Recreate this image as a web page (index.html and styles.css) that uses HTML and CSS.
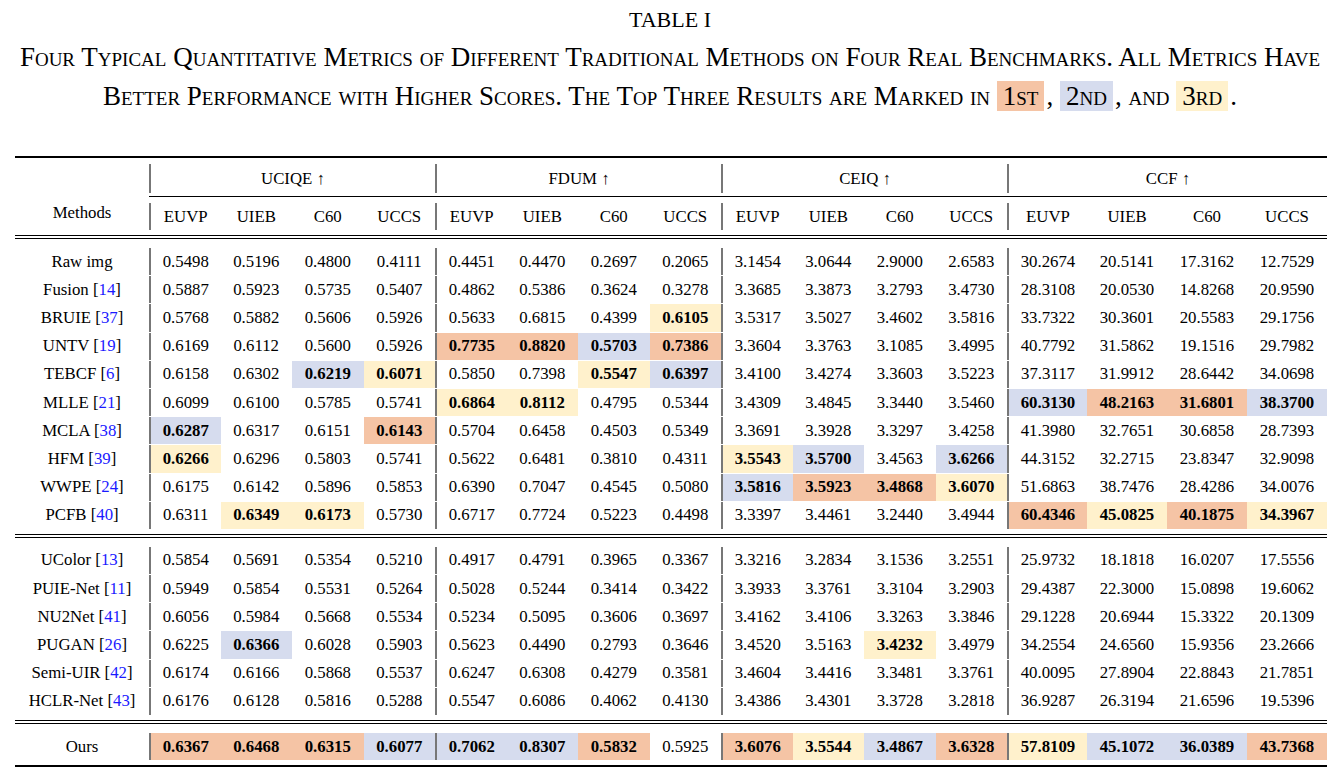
FILE: index.html
```html
<!DOCTYPE html>
<html>
<head>
<meta charset="utf-8">
<link rel="stylesheet" href="styles.css">
</head>
<body>
<div class="title">TABLE I</div>
<div class="caption">
  <div class="line">Four Typical Quantitative Metrics of Different Traditional Methods on Four Real Benchmarks. All Metrics Have</div>
  <div class="line">Better Performance with Higher Scores. The Top Three Results are Marked in <span class="mark m1">1st</span>, <span class="mark m2">2nd</span>, and <span class="mark m3">3rd</span>.</div>
</div>

<div class="tbl">
  <div class="rule-top"></div>
  <div class="hdr">
    <div class="meth">Methods</div>
    <div class="grp g1">UCIQE ↑</div>
    <div class="grp g2">FDUM ↑</div>
    <div class="grp g3">CEIQ ↑</div>
    <div class="grp g4">CCF ↑</div>
    <div class="cmid"></div>
    <div class="sub s2 g">EUVP</div><div class="sub s3">UIEB</div><div class="sub s4">C60</div><div class="sub s5">UCCS</div>
    <div class="sub s6 g">EUVP</div><div class="sub s7">UIEB</div><div class="sub s8">C60</div><div class="sub s9">UCCS</div>
    <div class="sub s10 g">EUVP</div><div class="sub s11">UIEB</div><div class="sub s12">C60</div><div class="sub s13">UCCS</div>
    <div class="sub s14 g">EUVP</div><div class="sub s15">UIEB</div><div class="sub s16">C60</div><div class="sub s17">UCCS</div>
  </div>
  <div class="dbl"></div>

  <div class="body">
    <div class="row"><div class="name">Raw img</div>
      <div class="c g">0.5498</div><div class="c">0.5196</div><div class="c">0.4800</div><div class="c">0.4111</div>
      <div class="c g">0.4451</div><div class="c">0.4470</div><div class="c">0.2697</div><div class="c">0.2065</div>
      <div class="c g">3.1454</div><div class="c">3.0644</div><div class="c">2.9000</div><div class="c">2.6583</div>
      <div class="c g">30.2674</div><div class="c">20.5141</div><div class="c">17.3162</div><div class="c">12.7529</div></div>
    <div class="row"><div class="name">Fusion [<span class="ref">14</span>]</div>
      <div class="c g">0.5887</div><div class="c">0.5923</div><div class="c">0.5735</div><div class="c">0.5407</div>
      <div class="c g">0.4862</div><div class="c">0.5386</div><div class="c">0.3624</div><div class="c">0.3278</div>
      <div class="c g">3.3685</div><div class="c">3.3873</div><div class="c">3.2793</div><div class="c">3.4730</div>
      <div class="c g">28.3108</div><div class="c">20.0530</div><div class="c">14.8268</div><div class="c">20.9590</div></div>
    <div class="row"><div class="name">BRUIE [<span class="ref">37</span>]</div>
      <div class="c g">0.5768</div><div class="c">0.5882</div><div class="c">0.5606</div><div class="c">0.5926</div>
      <div class="c g">0.5633</div><div class="c">0.6815</div><div class="c">0.4399</div><div class="c m3 b">0.6105</div>
      <div class="c g">3.5317</div><div class="c">3.5027</div><div class="c">3.4602</div><div class="c">3.5816</div>
      <div class="c g">33.7322</div><div class="c">30.3601</div><div class="c">20.5583</div><div class="c">29.1756</div></div>
    <div class="row"><div class="name">UNTV [<span class="ref">19</span>]</div>
      <div class="c g">0.6169</div><div class="c">0.6112</div><div class="c">0.5600</div><div class="c">0.5926</div>
      <div class="c g m1 b">0.7735</div><div class="c m1 b">0.8820</div><div class="c m2 b">0.5703</div><div class="c m1 b">0.7386</div>
      <div class="c g">3.3604</div><div class="c">3.3763</div><div class="c">3.1085</div><div class="c">3.4995</div>
      <div class="c g">40.7792</div><div class="c">31.5862</div><div class="c">19.1516</div><div class="c">29.7982</div></div>
    <div class="row"><div class="name">TEBCF [<span class="ref">6</span>]</div>
      <div class="c g">0.6158</div><div class="c">0.6302</div><div class="c m2 b">0.6219</div><div class="c m3 b">0.6071</div>
      <div class="c g">0.5850</div><div class="c">0.7398</div><div class="c m3 b">0.5547</div><div class="c m2 b">0.6397</div>
      <div class="c g">3.4100</div><div class="c">3.4274</div><div class="c">3.3603</div><div class="c">3.5223</div>
      <div class="c g">37.3117</div><div class="c">31.9912</div><div class="c">28.6442</div><div class="c">34.0698</div></div>
    <div class="row"><div class="name">MLLE [<span class="ref">21</span>]</div>
      <div class="c g">0.6099</div><div class="c">0.6100</div><div class="c">0.5785</div><div class="c">0.5741</div>
      <div class="c g m3 b">0.6864</div><div class="c m3 b">0.8112</div><div class="c">0.4795</div><div class="c">0.5344</div>
      <div class="c g">3.4309</div><div class="c">3.4845</div><div class="c">3.3440</div><div class="c">3.5460</div>
      <div class="c g m2 b">60.3130</div><div class="c m1 b">48.2163</div><div class="c m1 b">31.6801</div><div class="c m2 b">38.3700</div></div>
    <div class="row"><div class="name">MCLA [<span class="ref">38</span>]</div>
      <div class="c g m2 b">0.6287</div><div class="c">0.6317</div><div class="c">0.6151</div><div class="c m1 b">0.6143</div>
      <div class="c g">0.5704</div><div class="c">0.6458</div><div class="c">0.4503</div><div class="c">0.5349</div>
      <div class="c g">3.3691</div><div class="c">3.3928</div><div class="c">3.3297</div><div class="c">3.4258</div>
      <div class="c g">41.3980</div><div class="c">32.7651</div><div class="c">30.6858</div><div class="c">28.7393</div></div>
    <div class="row"><div class="name">HFM [<span class="ref">39</span>]</div>
      <div class="c g m3 b">0.6266</div><div class="c">0.6296</div><div class="c">0.5803</div><div class="c">0.5741</div>
      <div class="c g">0.5622</div><div class="c">0.6481</div><div class="c">0.3810</div><div class="c">0.4311</div>
      <div class="c g m3 b">3.5543</div><div class="c m2 b">3.5700</div><div class="c">3.4563</div><div class="c m2 b">3.6266</div>
      <div class="c g">44.3152</div><div class="c">32.2715</div><div class="c">23.8347</div><div class="c">32.9098</div></div>
    <div class="row"><div class="name">WWPE [<span class="ref">24</span>]</div>
      <div class="c g">0.6175</div><div class="c">0.6142</div><div class="c">0.5896</div><div class="c">0.5853</div>
      <div class="c g">0.6390</div><div class="c">0.7047</div><div class="c">0.4545</div><div class="c">0.5080</div>
      <div class="c g m2 b">3.5816</div><div class="c m1 b">3.5923</div><div class="c m1 b">3.4868</div><div class="c m3 b">3.6070</div>
      <div class="c g">51.6863</div><div class="c">38.7476</div><div class="c">28.4286</div><div class="c">34.0076</div></div>
    <div class="row"><div class="name">PCFB [<span class="ref">40</span>]</div>
      <div class="c g">0.6311</div><div class="c m3 b">0.6349</div><div class="c m3 b">0.6173</div><div class="c">0.5730</div>
      <div class="c g">0.6717</div><div class="c">0.7724</div><div class="c">0.5223</div><div class="c">0.4498</div>
      <div class="c g">3.3397</div><div class="c">3.4461</div><div class="c">3.2440</div><div class="c">3.4944</div>
      <div class="c g m1 b">60.4346</div><div class="c m3 b">45.0825</div><div class="c m1 b">40.1875</div><div class="c m3 b">34.3967</div></div>
  </div>
  <div class="dbl"></div>

  <div class="body">
    <div class="row"><div class="name">UColor [<span class="ref">13</span>]</div>
      <div class="c g">0.5854</div><div class="c">0.5691</div><div class="c">0.5354</div><div class="c">0.5210</div>
      <div class="c g">0.4917</div><div class="c">0.4791</div><div class="c">0.3965</div><div class="c">0.3367</div>
      <div class="c g">3.3216</div><div class="c">3.2834</div><div class="c">3.1536</div><div class="c">3.2551</div>
      <div class="c g">25.9732</div><div class="c">18.1818</div><div class="c">16.0207</div><div class="c">17.5556</div></div>
    <div class="row"><div class="name">PUIE-Net [<span class="ref">11</span>]</div>
      <div class="c g">0.5949</div><div class="c">0.5854</div><div class="c">0.5531</div><div class="c">0.5264</div>
      <div class="c g">0.5028</div><div class="c">0.5244</div><div class="c">0.3414</div><div class="c">0.3422</div>
      <div class="c g">3.3933</div><div class="c">3.3761</div><div class="c">3.3104</div><div class="c">3.2903</div>
      <div class="c g">29.4387</div><div class="c">22.3000</div><div class="c">15.0898</div><div class="c">19.6062</div></div>
    <div class="row"><div class="name">NU2Net [<span class="ref">41</span>]</div>
      <div class="c g">0.6056</div><div class="c">0.5984</div><div class="c">0.5668</div><div class="c">0.5534</div>
      <div class="c g">0.5234</div><div class="c">0.5095</div><div class="c">0.3606</div><div class="c">0.3697</div>
      <div class="c g">3.4162</div><div class="c">3.4106</div><div class="c">3.3263</div><div class="c">3.3846</div>
      <div class="c g">29.1228</div><div class="c">20.6944</div><div class="c">15.3322</div><div class="c">20.1309</div></div>
    <div class="row"><div class="name">PUGAN [<span class="ref">26</span>]</div>
      <div class="c g">0.6225</div><div class="c m2 b">0.6366</div><div class="c">0.6028</div><div class="c">0.5903</div>
      <div class="c g">0.5623</div><div class="c">0.4490</div><div class="c">0.2793</div><div class="c">0.3646</div>
      <div class="c g">3.4520</div><div class="c">3.5163</div><div class="c m3 b">3.4232</div><div class="c">3.4979</div>
      <div class="c g">34.2554</div><div class="c">24.6560</div><div class="c">15.9356</div><div class="c">23.2666</div></div>
    <div class="row"><div class="name">Semi-UIR [<span class="ref">42</span>]</div>
      <div class="c g">0.6174</div><div class="c">0.6166</div><div class="c">0.5868</div><div class="c">0.5537</div>
      <div class="c g">0.6247</div><div class="c">0.6308</div><div class="c">0.4279</div><div class="c">0.3581</div>
      <div class="c g">3.4604</div><div class="c">3.4416</div><div class="c">3.3481</div><div class="c">3.3761</div>
      <div class="c g">40.0095</div><div class="c">27.8904</div><div class="c">22.8843</div><div class="c">21.7851</div></div>
    <div class="row"><div class="name">HCLR-Net [<span class="ref">43</span>]</div>
      <div class="c g">0.6176</div><div class="c">0.6128</div><div class="c">0.5816</div><div class="c">0.5288</div>
      <div class="c g">0.5547</div><div class="c">0.6086</div><div class="c">0.4062</div><div class="c">0.4130</div>
      <div class="c g">3.4386</div><div class="c">3.4301</div><div class="c">3.3728</div><div class="c">3.2818</div>
      <div class="c g">36.9287</div><div class="c">26.3194</div><div class="c">21.6596</div><div class="c">19.5396</div></div>
  </div>
  <div class="dbl"></div>

  <div class="body">
    <div class="row"><div class="name">Ours</div>
      <div class="c g m1 b">0.6367</div><div class="c m1 b">0.6468</div><div class="c m1 b">0.6315</div><div class="c m2 b">0.6077</div>
      <div class="c g m2 b">0.7062</div><div class="c m2 b">0.8307</div><div class="c m1 b">0.5832</div><div class="c">0.5925</div>
      <div class="c g m1 b">3.6076</div><div class="c m3 b">3.5544</div><div class="c m2 b">3.4867</div><div class="c m1 b">3.6328</div>
      <div class="c g m3 b">57.8109</div><div class="c m2 b">45.1072</div><div class="c m2 b">36.0389</div><div class="c m1 b">43.7368</div></div>
  </div>
  <div class="rule-bot"></div>
</div>
</body>
</html>
```

FILE: styles.css
```css
* { box-sizing: border-box; }

body {
  margin: 0;
  background: #fff;
  color: #000;
  font-family: "Liberation Serif", "Times New Roman", serif;
}

.title {
  text-align: center;
  font-size: 22px;
  line-height: 24px;
  padding-top: 8px;
}

.caption {
  margin-top: 6px;
  text-align: center;
  font-size: 27px;
  line-height: 39px;
  font-variant: small-caps;
  white-space: nowrap;
}

.mark {
  display: inline-block;
  line-height: 30px;
  padding: 0 6px;
  margin-right: 2px;
}

.m1 { background: #f5c4a5; }
.m2 { background: #d6dcee; }
.m3 { background: #fff1cc; }

.tbl {
  --cols: 134px repeat(12, 71.5px) repeat(4, 80px);
  width: 1312px;
  margin: 40px 0 0 15px;
  font-size: 16.8px;
}

.rule-top, .rule-bot {
  height: 2px;
  background: #000;
}

.hdr {
  display: grid;
  grid-template-columns: var(--cols);
  grid-template-rows: 6px 29px 3px 1px 6px 27px 5px;
}

.meth {
  grid-column: 1;
  grid-row: 4 / 7;
  display: flex;
  align-items: center;
  justify-content: center;
}

.grp {
  grid-row: 2;
  display: flex;
  align-items: center;
  justify-content: center;
  border-left: 2px solid #777;
}
.g1 { grid-column: 2 / 6; }
.g2 { grid-column: 6 / 10; }
.g3 { grid-column: 10 / 14; }
.g4 { grid-column: 14 / 18; }

.cmid {
  grid-row: 4;
  grid-column: 2 / 18;
  background: #000;
}

.sub {
  grid-row: 6;
  display: flex;
  align-items: center;
  justify-content: center;
}
.s2 { grid-column: 2; } .s3 { grid-column: 3; } .s4 { grid-column: 4; } .s5 { grid-column: 5; }
.s6 { grid-column: 6; } .s7 { grid-column: 7; } .s8 { grid-column: 8; } .s9 { grid-column: 9; }
.s10 { grid-column: 10; } .s11 { grid-column: 11; } .s12 { grid-column: 12; } .s13 { grid-column: 13; }
.s14 { grid-column: 14; } .s15 { grid-column: 15; } .s16 { grid-column: 16; } .s17 { grid-column: 17; }

.dbl {
  height: 4px;
  border-top: 1px solid #000;
  border-bottom: 1px solid #000;
}

.body {
  padding: 8px 0 5px;
}

.row {
  display: grid;
  grid-template-columns: var(--cols);
  height: 28.2px;
  padding-top: 1px;
}

.name, .c {
  display: flex;
  align-items: center;
  justify-content: center;
  white-space: nowrap;
}

.g { border-left: 2px solid #777; }
.b { font-weight: bold; }
.ref { color: #1a1aff; }
```
